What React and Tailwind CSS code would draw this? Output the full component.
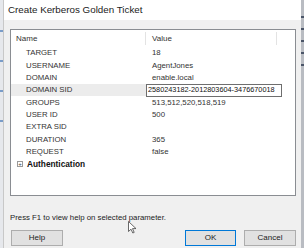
import React from "react";

const rows = [
  ["TARGET", "18"],
  ["USERNAME", "AgentJones"],
  ["DOMAIN", "enable.local"],
  ["DOMAIN SID", "2580243182-2012803604-3476670018", true],
  ["GROUPS", "513,512,520,518,519"],
  ["USER ID", "500"],
  ["EXTRA SID", ""],
  ["DURATION", "365"],
  ["REQUEST", "false"],
];

export default function App() {
  return (
    <div
      className="relative flex h-[248px] w-[304px] overflow-hidden bg-[#f0f0f0] text-[#222]"
      style={{ fontFamily: '"Liberation Sans", Arial, sans-serif' }}
    >
      {/* left background strip */}
      <div className="flex w-[3px] flex-col gap-[28px] bg-[#e6e8ec] pt-[30px]">
        <div className="h-[2px] w-[3px] bg-[#7a9cc8]" />
        <div className="h-[2px] w-[3px] bg-[#7a9cc8]" />
        <div className="h-[2px] w-[3px] bg-[#7a9cc8]" />
        <div className="h-[2px] w-[3px] bg-[#7a9cc8]" />
      </div>

      {/* dialog */}
      <div className="flex w-[298px] flex-col border-l border-[#c8c8c8]">
        <div className="flex h-[20px] items-center bg-white pl-[4px] text-[9.8px] text-[#222]">
          Create Kerberos Golden Ticket
        </div>
        <div className="flex flex-1 flex-col bg-[#f0f0f0] pl-[6px] pr-[5px] pt-[9px]">
          {/* list view */}
          <div className="relative flex h-[167px] flex-col border border-[#8a8d92] bg-white">
            <div className="relative flex h-[17px] items-center text-[8px] text-[#333]">
              <div className="w-[134px] pl-[5px]">Name</div>
              <div className="h-[13px] w-px bg-[#e3e3e3]" />
              <div className="pl-[6px]">Value</div>
              <div className="absolute left-[265px] top-[2px] h-[13px] w-px bg-[#e3e3e3]" />
            </div>
            {rows.map(([name, value, sel]) => (
              <div key={name} className="flex h-[12.33px] items-center whitespace-nowrap text-[7.8px] text-[#333]">
                <div
                  className={
                    "flex h-full w-[135px] shrink-0 items-center pl-[15px] " +
                    (sel ? "bg-[#ececec]" : "")
                  }
                >
                  {name}
                </div>
                {sel ? (
                  <div className="flex h-[13px] w-[136px] shrink-0 items-center overflow-hidden border border-[#6e6e6e] bg-white pl-[1px] text-[7.3px] text-[#111]">
                    {value}
                  </div>
                ) : (
                  <div className="pl-[6px]">{value}</div>
                )}
              </div>
            ))}
            <div className="flex h-[12.33px] items-center text-[8.3px] font-bold text-[#111]">
              <div className="ml-[6px] mr-[4px] flex h-[6px] w-[6px] items-center justify-center border border-[#9a9a9a] text-[6px] leading-none font-normal text-[#444]">
                +
              </div>
              Authentication
            </div>
          </div>

          <div className="mt-[16px] text-[7.8px] text-[#222]">
            Press F1 to view help on selected parameter.
          </div>

          <div className="mt-[6px] flex items-center">
            <div className="ml-[1px] flex h-[16px] w-[52px] items-center justify-center border border-[#adadad] bg-[#e1e1e1] text-[8px]">
              Help
            </div>
            <div className="ml-auto flex h-[16px] w-[51px] items-center justify-center border border-[#0078d7] bg-[#e1e1e1] text-[8px]">
              OK
            </div>
            <div className="ml-[8px] flex h-[16px] w-[52px] items-center justify-center border border-[#adadad] bg-[#e1e1e1] text-[8px]">
              Cancel
            </div>
          </div>
        </div>
      </div>

      {/* right background strip */}
      <div className="flex w-[3px] flex-col gap-[10px] bg-[#b9bcc2] pt-[16px]">
        <div className="h-[2px] w-[3px] bg-[#4a5568]" />
        <div className="h-[2px] w-[3px] bg-[#4a5568]" />
        <div className="h-[2px] w-[3px] bg-[#4a5568]" />
        <div className="h-[2px] w-[3px] bg-[#4a5568]" />
        <div className="h-[2px] w-[3px] bg-[#4a5568]" />
      </div>

      {/* mouse cursor */}
      <svg
        className="absolute left-[128px] top-[221px]"
        width="9"
        height="13"
        viewBox="0 0 9 13"
      >
        <path
          d="M0.5 0.5 L0.5 10.5 L3 8.2 L4.8 12 L6.2 11.4 L4.5 7.6 L8 7.6 Z"
          fill="white"
          stroke="#444"
          strokeWidth="0.8"
          strokeLinejoin="round"
        />
      </svg>
    </div>
  );
}
